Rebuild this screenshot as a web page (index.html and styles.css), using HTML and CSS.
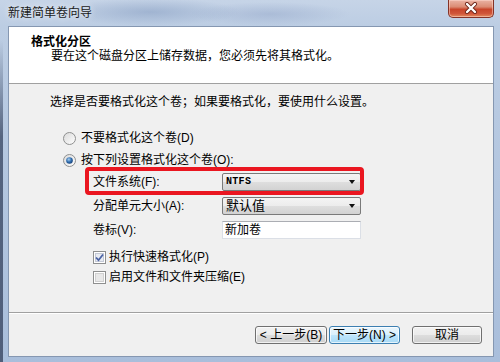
FILE: index.html
```html
<!DOCTYPE html>
<html lang="zh-CN">
<head>
<meta charset="utf-8">
<title>新建简单卷向导</title>
<link rel="stylesheet" href="styles.css">
</head>
<body>
<div class="window">
  <div class="titlebar">
    <span class="title">新建简单卷向导</span>
    <div class="close">
      <svg width="16" height="12" viewBox="0 0 16 12">
        <path d="M4 2 L12 10 M12 2 L4 10" stroke="#6b2418" stroke-width="4" stroke-linecap="round"/>
        <path d="M4 2 L12 10 M12 2 L4 10" stroke="#ffffff" stroke-width="2.4" stroke-linecap="round"/>
      </svg>
    </div>
  </div>
  <div class="client">
    <div class="header">
      <div class="h-title">格式化分区</div>
      <div class="h-sub">要在这个磁盘分区上储存数据，您必须先将其格式化。</div>
    </div>
    <div class="body">
      <p class="intro">选择是否要格式化这个卷；如果要格式化，要使用什么设置。</p>
      <div class="radio-row first">
        <svg class="radio" width="13" height="13" viewBox="0 0 13 13">
          <defs>
            <linearGradient id="rg" x1="0" y1="0" x2="1" y2="1">
              <stop offset="0" stop-color="#d9d9d9"/>
              <stop offset="1" stop-color="#ffffff"/>
            </linearGradient>
          </defs>
          <circle cx="6.5" cy="6.5" r="6" fill="url(#rg)" stroke="#8e8f8f"/>
        </svg>
        <span>不要格式化这个卷(D)</span>
      </div>
      <div class="radio-row second">
        <svg class="radio" width="13" height="13" viewBox="0 0 13 13">
          <defs>
            <radialGradient id="dot" cx="0.4" cy="0.35" r="0.7">
              <stop offset="0" stop-color="#a9d0f0"/>
              <stop offset="0.55" stop-color="#2f6cae"/>
              <stop offset="1" stop-color="#163e74"/>
            </radialGradient>
          </defs>
          <circle cx="6.5" cy="6.5" r="6" fill="url(#rg)" stroke="#8e8f8f"/>
          <circle cx="6.5" cy="6.5" r="3.3" fill="url(#dot)"/>
        </svg>
        <span>按下列设置格式化这个卷(O):</span>
      </div>
      <div class="form">
        <span class="label">文件系统(F):</span>
        <div class="combo"><span class="combo-text mono">NTFS</span><span class="arrow"></span></div>
        <span class="label">分配单元大小(A):</span>
        <div class="combo"><span class="combo-text big">默认值</span><span class="arrow"></span></div>
        <span class="label">卷标(V):</span>
        <div class="textbox">新加卷</div>
      </div>
      <div class="check-row first">
        <svg class="check" width="13" height="13" viewBox="0 0 13 13">
          <rect x="0.5" y="0.5" width="12" height="12" fill="#ffffff" stroke="#8e8f8f"/>
          <rect x="2.5" y="2.5" width="8" height="8" fill="#e8ebf2" stroke="#c4c9d6"/>
          <path d="M3 6.5 L5.5 9.2 L10 3.5" fill="none" stroke="#4b63a5" stroke-width="1.8"/>
        </svg>
        <span>执行快速格式化(P)</span>
      </div>
      <div class="check-row second">
        <svg class="check" width="13" height="13" viewBox="0 0 13 13">
          <rect x="0.5" y="0.5" width="12" height="12" fill="#ffffff" stroke="#8e8f8f"/>
          <rect x="2.5" y="2.5" width="8" height="8" fill="#e8e8e8" stroke="#d0d0d0"/>
        </svg>
        <span>启用文件和文件夹压缩(E)</span>
      </div>
      <div class="highlight"></div>
    </div>
    <div class="footer">
      <button class="btn">&lt; 上一步(B)</button>
      <button class="btn focus">下一步(N) &gt;</button>
      <button class="btn cancel">取消</button>
    </div>
  </div>
</div>
</body>
</html>
```

FILE: styles.css
```css
* { box-sizing: border-box; }
html, body { margin: 0; padding: 0; }
body {
  width: 500px;
  height: 362px;
  overflow: hidden;
  font-family: "Liberation Sans", "Noto Sans CJK SC", sans-serif;
  font-size: 12px;
  color: #000;
}
.window {
  width: 500px;
  height: 362px;
  display: flex;
  flex-direction: column;
  background:
    radial-gradient(ellipse 90px 14px at 150px 12px, rgba(120,145,185,0.45), rgba(120,145,185,0) 100%),
    radial-gradient(ellipse 80px 12px at 270px 14px, rgba(130,150,190,0.35), rgba(130,150,190,0) 100%),
    linear-gradient(180deg, #c6d4e7 0, #bccde3 26px, #a9bedb 100%);
  position: relative;
}
.window::before {
  content: "";
  position: absolute;
  left: 0;
  top: 40px;
  width: 3px;
  bottom: 0;
  background: linear-gradient(180deg, rgba(70,85,115,0) 0, #55647f 30%, #4f5e7a 100%);
}
.titlebar {
  height: 26px;
  display: flex;
  justify-content: space-between;
  align-items: flex-start;
  padding-left: 8px;
  padding-right: 6px;
}
.title {
  margin-top: 6px;
  line-height: 14px;
  font-size: 12px;
  color: #1a1a1a;
  text-shadow: 0 0 6px rgba(255,255,255,0.9);
}
.close {
  width: 46px;
  height: 18px;
  border: 1px solid #843327;
  border-top: none;
  border-radius: 0 0 5px 5px;
  background: linear-gradient(180deg, #eab3a4 0, #db8c74 40%, #c8452a 55%, #d0563a 80%, #e48c5e 100%);
  display: flex;
  align-items: center;
  justify-content: center;
  box-shadow: inset 0 0 0 1px rgba(255,220,210,0.5);
}
.close svg { margin-top: -2px; }
.client {
  margin: 0 6px 5px 8px;
  flex: 1;
  border: 1px solid #8597b1;
  background: #f0f0f0;
  display: flex;
  flex-direction: column;
}
.header {
  height: 57px;
  background: #ffffff;
  border-bottom: 1px solid #a0a0a0;
  padding: 8px 0 0 22px;
}
.h-title {
  font-weight: bold;
  line-height: 14px;
}
.h-sub {
  margin-left: 20px;
  line-height: 14px;
}
.body {
  position: relative;
  height: 229px;
  border-bottom: 1px solid #a0a0a0;
  box-shadow: 0 1px 0 #ffffff;
  padding: 11px 0 0 41px;
  display: flex;
  flex-direction: column;
}
.intro {
  margin: 0;
  line-height: 14px;
}
.radio-row, .check-row {
  display: flex;
  align-items: center;
  height: 14px;
  line-height: 14px;
}
.radio-row { margin-left: 13px; gap: 5px; }
.radio-row.first { margin-top: 22px; }
.radio-row.second { margin-top: 8px; }
.check-row { margin-left: 43px; gap: 3px; }
.check-row.first { margin-top: 11px; }
.check-row.second { margin-top: 6px; }
.radio, .check { flex: none; }
.form {
  margin-top: 6px;
  margin-left: 43px;
  display: grid;
  grid-template-columns: 129px 139px;
  grid-auto-rows: 18px;
  row-gap: 6px;
  align-items: center;
}
.label { line-height: 14px; }
.combo {
  height: 18px;
  border: 1px solid #7a7a7a;
  border-radius: 2px;
  background: linear-gradient(180deg, #f4f4f4 0, #ececec 50%, #dedede 51%, #d2d2d2 100%);
  display: flex;
  align-items: center;
  justify-content: space-between;
  padding: 0 5px 0 3px;
}
.combo-text { line-height: 16px; }
.combo-text.mono {
  font-family: "Liberation Mono", "DejaVu Sans Mono", monospace;
  font-weight: bold;
  font-size: 10px;
  letter-spacing: 0.3px;
}
.combo-text.big { font-size: 13px; }
.arrow {
  width: 0;
  height: 0;
  border-left: 3.5px solid transparent;
  border-right: 3.5px solid transparent;
  border-top: 4px solid #111;
}
.textbox {
  height: 18px;
  background: #ffffff;
  border: 1px solid #dbdfe6;
  border-top-color: #abadb3;
  padding-left: 2px;
  line-height: 16px;
}
.highlight {
  position: absolute;
  left: 76px;
  top: 83px;
  width: 279px;
  height: 28px;
  border: 4px solid #ea1620;
  border-radius: 4px;
  pointer-events: none;
}
.footer {
  flex: 1;
  display: flex;
  justify-content: flex-end;
  align-items: flex-start;
  padding: 13px 11px 0 0;
}
.btn {
  font-family: "Liberation Sans", "Noto Sans CJK SC", sans-serif;
  font-size: 12px;
  color: #000;
  height: 18px;
  width: 72px;
  padding: 0;
  line-height: 16px;
  border: 1px solid #707070;
  border-radius: 3px;
  background: linear-gradient(180deg, #f2f2f2 0, #ebebeb 50%, #dddddd 51%, #cfcfcf 100%);
  box-shadow: inset 0 0 0 1px rgba(255,255,255,0.7);
}
.btn.focus {
  width: 71px;
  margin-left: 2px;
  border-color: #3c7fb1;
  background: linear-gradient(180deg, #eaf6fd 0, #d9f0fc 50%, #bee6fd 51%, #a7d9f5 100%);
}
.btn.cancel {
  width: 70px;
  margin-left: 12px;
}
```
